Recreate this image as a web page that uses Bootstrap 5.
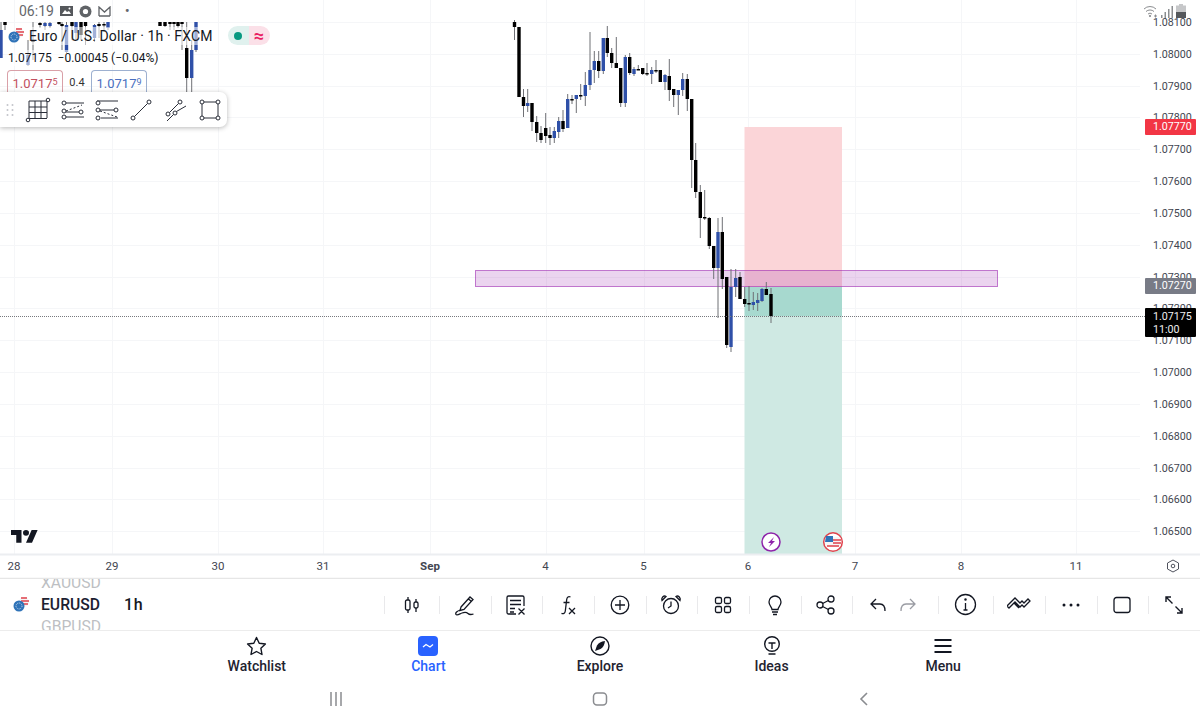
<!DOCTYPE html>
<html lang="en">

<head>
  <meta charset="utf-8">
  <meta name="viewport" content="width=device-width, initial-scale=1">
  <title>EURUSD Chart</title>
  <link href="https://cdn.jsdelivr.net/npm/bootstrap@5.3.6/dist/css/bootstrap.min.css" rel="stylesheet">
  <style>
    html, body { height: 720px; overflow: hidden; }
    body { font-family: Roboto, "Liberation Sans", sans-serif; color: #131722; background: #fff; }
    .chart-area { height: 579px; flex: none; }
    .chart-svg { display: block; }
    .chart-svg text { font-family: Roboto, "Liberation Sans", sans-serif; fill: #434651; }
    .price-txt { font-size: 10.7px; }
    .time-txt { font-size: 11.5px; }
    .status-bar { left: 0; right: 0; top: 0; height: 22px; padding: 0 19px; color: #66686c; font-size: 14px; gap: 6px; }
    .status-icons { left: 1143px; top: 4px; height: 14px; gap: 3px; }
    .legend-box { left: 7px; top: 26px; }
    .legend-flag { margin-left: 1px; }
    .legend-title { font-size: 14px; line-height: 18px; letter-spacing: .12px; background: rgba(255, 255, 255, .55); }
    .legend-vals { font-size: 12px; line-height: 16px; margin-top: 5px; margin-left: 1px; width: fit-content; background: rgba(255, 255, 255, .55); }
    .pill-pair { height: 19px; margin-left: 15px; border-radius: 10px; overflow: hidden; }
    .pill-green { width: 21px; background: #e0f1ee; }
    .pill-dot { width: 8px; height: 8px; border-radius: 50%; background: #089981; }
    .pill-pink { width: 21px; background: #fbe0e8; color: #e91e63; font-size: 18px; font-weight: 700; line-height: 1; }
    .quote-btn { width: 56px; height: 26px; border: 1px solid; border-radius: 4px 4px 0 0; border-bottom: 0; font-size: 13px; }
    .quote-btn sup { font-size: 9px; top: -.35em; }
    .quote-sell { color: #c2505f; border-color: #d9a0a8; }
    .quote-buy { color: #4a6fc0; border-color: #9db0d0; }
    .quote-mid { width: 28px; height: 26px; font-size: 11px; color: #333; }
    .draw-bar { left: 0; top: 92px; width: 227px; height: 35px; border-radius: 0 7px 7px 0; box-shadow: 0 1px 5px rgba(0, 0, 0, .28); padding-left: 5px; }
    .draw-grip { width: 10px; margin-right: 6px; }
    .draw-item { width: 34.4px; }
    .price-tag { left: 1145px; width: 51px; border-radius: 1px; color: #fff; font-size: 10.7px; line-height: 14px; padding: 1px 0 1px 8px; }
    .tag-red { top: 119px; background: #f23645; }
    .tag-grey { top: 278px; background: #787b86; }
    .tag-black { top: 308px; background: #000; height: 29px; line-height: 13px; padding-top: 2px; color: #eee; }
    .tool-row { height: 52px; flex: none; border-bottom: 1px solid #ececec; }
    .sym-box { width: 384px; padding-left: 13px; }
    .sym-list { height: 51px; margin-left: 11px; overflow: hidden; width: 83px; font-size: 15.7px; line-height: 22px; }
    .sym-fade { color: #bdbfc3; }
    .sym-main { font-weight: 500; color: #1c2030; }
    .sym-res { font-size: 16px; font-weight: 500; letter-spacing: .6px; }
    .tool-btn { flex: 0 0 51.67px; height: 100%; }
    .tool-btn::before { content: ""; position: absolute; left: 0; top: 17px; height: 18px; width: 1px; background: #e9e9eb; }
    .tool-wide { flex-basis: 55px; }
    .tool-dbl { flex-basis: 86px; }
    .tab-row { height: 54px; flex: none; width: 858px; }
    .tab-item { flex: 1 1 0; font-size: 14px; font-weight: 500; line-height: 16px; color: #1f2330; padding-top: 5px; }
    .tab-active { color: #2962ff; }
    .tab-item svg { display: block; margin-bottom: 2px; }
    .sys-row { height: 35px; flex: none; width: 792px; padding-bottom: 7px; }
    .sys-item { flex: 1 1 0; }
  </style>
</head>

<body>
  <div class="d-flex flex-column align-items-center vh-100">
    <div class="chart-area position-relative w-100">
      <svg id="chart" class="chart-svg" width="1200" height="579" viewBox="0 0 1200 579"></svg>

      <div class="status-bar position-absolute d-flex align-items-center">
        <span>06:19</span>
        <svg width="13" height="12" viewBox="0 0 13 12"><path fill="#55585c" d="M0 1h13v10H0z"/><path fill="#fff" d="M2 9l3-4 2 2 2-1 2 3z"/><circle cx="9.5" cy="3.5" r="1" fill="#fff"/></svg>
        <svg width="13" height="13" viewBox="0 0 13 13"><circle cx="6.5" cy="6.5" r="6" fill="#606367"/><circle cx="6.5" cy="6.5" r="2.6" fill="#fff"/></svg>
        <svg width="13" height="11" viewBox="0 0 13 11" fill="none" stroke="#606367" stroke-width="1.3"><path d="M1 10V1l5.5 5L12 1v9M1 10h11"/></svg>
        <span class="ms-2 lh-1 fw-bold small">•</span>
      </div>
      <div class="status-icons position-absolute d-flex align-items-end">
        <svg width="15" height="13" viewBox="0 0 15 13" fill="none" stroke="#8b8d90" stroke-width="1"><path d="M1 4a8.5 8.5 0 0 1 12 0M3 6.500a6 6 0 0 1 8 0M5 9a3 3 0 0 1 4 0"/><circle cx="7" cy="11" r=".7" fill="#8b8d90"/><path d="M11 11h3M12.500 9.500v3"/></svg>
        <svg width="12" height="12" viewBox="0 0 12 12" fill="#8b8d90"><path d="M0 9h1.500v3H0zM3.500 6H5v6H3.500zM7 3h1.500v9H7zM10.500 0H12v12h-1.500z"/></svg>
        <svg width="10" height="14" viewBox="0 0 10 14"><path fill="#c6c7c9" d="M3 0h4v1.500h3V8H0V1.500h3z"/><path fill="#55585c" d="M0 8h10v6H0z"/></svg>
      </div>

      <div class="legend-box position-absolute">
        <div class="d-flex align-items-center">
          <svg width="17" height="17" viewBox="0 0 17 17" class="legend-flag me-1 flex-none"><circle cx="11" cy="6" r="5" fill="#f6f6f6"/><path d="M8 2h6M8 5h8M9 8h6" stroke="#e0424c" stroke-width="1.400"/><circle cx="6" cy="10" r="5.500" fill="#2f73b8"/><circle cx="6" cy="10" r="3" fill="none" stroke="#cfe0f0" stroke-dasharray="1 1"/></svg>
          <span class="legend-title">Euro / U.S. Dollar · 1h · FXCM</span>
          <span class="pill-pair d-flex">
            <span class="pill-green d-flex align-items-center justify-content-center"><span class="pill-dot"></span></span>
            <span class="pill-pink d-flex align-items-center justify-content-center">≈</span>
          </span>
        </div>
        <div class="legend-vals">1.07175 &nbsp;−0.00045 (−0.04%)</div>
        <div class="d-flex align-items-start mt-1">
          <div class="quote-btn quote-sell d-flex align-items-center justify-content-center"><span>1.0717<sup>5</sup></span></div>
          <div class="quote-mid d-flex align-items-center justify-content-center">0.4</div>
          <div class="quote-btn quote-buy d-flex align-items-center justify-content-center"><span>1.0717<sup>9</sup></span></div>
        </div>
      </div>

      <div class="draw-bar position-absolute bg-white d-flex align-items-center">
        <svg class="draw-grip" width="10" height="14" viewBox="0 0 10 14" fill="#c3c5ca"><circle cx="2.500" cy="2" r="1"/><circle cx="7.500" cy="2" r="1"/><circle cx="2.500" cy="7" r="1"/><circle cx="7.500" cy="7" r="1"/><circle cx="2.500" cy="12" r="1"/><circle cx="7.500" cy="12" r="1"/></svg>
        <div class="draw-item d-flex justify-content-center"><svg width="26" height="26" viewBox="0 0 26 26" fill="none" stroke="#2a2e39" stroke-width="1"><path d="M4 4h18v17M4 4v17.500M3.500 21.500h18.500M10 4v17.500M16 4v17.500M4 10h18M4 15.500h18"/><circle cx="23" cy="3" r="1.800" fill="#fff"/><circle cx="3" cy="23" r="1.800" fill="#fff"/></svg></div>
        <div class="draw-item d-flex justify-content-center"><svg width="26" height="24" viewBox="0 0 26 24" fill="none" stroke="#2a2e39" stroke-width="1"><circle cx="4" cy="5" r="2" fill="#fff"/><path d="M6 5h18"/><circle cx="4" cy="13" r="2" fill="#fff"/><path d="M6 13 22 7" stroke-dasharray="2 2"/><circle cx="4" cy="19" r="2" fill="#fff"/><path d="M6 19h18"/><path d="M6 14h13"/><circle cx="21" cy="14" r="2" fill="#fff"/></svg></div>
        <div class="draw-item d-flex justify-content-center"><svg width="26" height="24" viewBox="0 0 26 24" fill="none" stroke="#2a2e39" stroke-width="1"><path d="M3 3h21M5 12h15M7 20h17"/><circle cx="4" cy="5" r="2" fill="#fff"/><circle cx="4" cy="12" r="2" fill="#fff"/><circle cx="22" cy="12" r="2" fill="#fff"/><circle cx="4" cy="20" r="2" fill="#fff"/><path d="M6 13l17 6" stroke-dasharray="2 2"/></svg></div>
        <div class="draw-item d-flex justify-content-center"><svg width="24" height="24" viewBox="0 0 24 24" fill="none" stroke="#2a2e39" stroke-width="1"><circle cx="4" cy="20" r="2" fill="#fff"/><circle cx="20" cy="4" r="2" fill="#fff"/><path d="M5.500 18.500l13-13"/></svg></div>
        <div class="draw-item d-flex justify-content-center"><svg width="24" height="24" viewBox="0 0 24 24" fill="none" stroke="#2a2e39" stroke-width="1"><circle cx="4" cy="16" r="2" fill="#fff"/><circle cx="16" cy="4" r="2" fill="#fff"/><path d="M5.500 14.500l9-9"/><circle cx="11" cy="15" r="2" fill="#fff"/><path d="M3 23l6.500-6.500M12.500 13.500L22 8"/></svg></div>
        <div class="draw-item d-flex justify-content-center"><svg width="24" height="24" viewBox="0 0 24 24" fill="none" stroke="#2a2e39" stroke-width="1"><path d="M4 4h16v16H4z"/><circle cx="4" cy="4" r="2" fill="#fff"/><circle cx="20" cy="4" r="2" fill="#fff"/><circle cx="4" cy="20" r="2" fill="#fff"/><circle cx="20" cy="20" r="2" fill="#fff"/></svg></div>
      </div>

      <div class="price-tag tag-red position-absolute">1.07770</div>
      <div class="price-tag tag-grey position-absolute">1.07270</div>
      <div class="price-tag tag-black position-absolute">1.07175<br>11:00</div>
    </div>

    <div class="tool-row d-flex align-items-center w-100 bg-white">
      <div class="sym-box d-flex align-items-center">
        <svg width="17" height="17" viewBox="0 0 17 17" class="flex-none"><circle cx="11" cy="6" r="5" fill="#f6f6f6"/><path d="M8 2h6M8 5h8M9 8h6" stroke="#e0424c" stroke-width="1.400"/><circle cx="6" cy="10" r="5.500" fill="#2f73b8"/><circle cx="6" cy="10" r="3" fill="none" stroke="#cfe0f0" stroke-dasharray="1 1"/></svg>
        <div class="sym-list d-flex flex-column justify-content-center">
          <div class="sym-fade">XAUUSD</div>
          <div class="sym-main">EURUSD</div>
          <div class="sym-fade">GBPUSD</div>
        </div>
        <span class="sym-res">1h</span>
      </div>
      <div class="d-flex align-items-center flex-grow-1 h-100">
        <div class="tool-btn tool-wide position-relative d-flex align-items-center justify-content-center"><svg width="22" height="22" viewBox="0 0 22 22" fill="none" stroke="#131722" stroke-width="1.300"><path d="M7 3v16M15 5v13"/><rect x="4.500" y="6" width="4.500" height="10" rx="1.500" fill="#fff"/><rect x="13" y="8" width="4" height="6" rx="1.500" fill="#fff"/></svg></div>
        <div class="tool-btn position-relative d-flex align-items-center justify-content-center"><svg width="22" height="22" viewBox="0 0 22 22" fill="none" stroke="#131722" stroke-width="1.300"><path d="M7 13l9-10 3 2.500-9 10-4 1zM14.500 5l3 2.500"/><path d="M6.500 16C3 17 1 19 2 20.500s3.500-.5 6-1.500 5-.5 6 .5 4 1 5.500.5"/></svg></div>
        <div class="tool-btn position-relative d-flex align-items-center justify-content-center"><svg width="22" height="22" viewBox="0 0 22 22" fill="none" stroke="#131722" stroke-width="1.300"><path d="M11 20H3.500a1.500 1.500 0 0 1-1.500-1.500v-15A1.500 1.500 0 0 1 3.500 2h14A1.500 1.500 0 0 1 19 3.500V12M5 6.500h11M5 10.500h11M5 14.500h5M5 18h4M13.500 14.500l6 6M19.500 14.500l-6 6"/></svg></div>
        <div class="tool-btn position-relative d-flex align-items-center justify-content-center"><svg width="22" height="22" viewBox="0 0 22 22" fill="none" stroke="#131722" stroke-width="1.300"><path d="M13.500 3c-2-1-3.500 0-3.800 2.500L8.300 17c-.3 2.500-2 3.200-3.800 2.300M6.500 8.500h6M12 14l6 6M18 14l-6 6"/></svg></div>
        <div class="tool-btn position-relative d-flex align-items-center justify-content-center"><svg width="22" height="22" viewBox="0 0 22 22" fill="none" stroke="#131722" stroke-width="1.300"><circle cx="11" cy="11" r="8.800"/><path d="M11 6v10M6 11h10"/></svg></div>
        <div class="tool-btn position-relative d-flex align-items-center justify-content-center"><svg width="22" height="22" viewBox="0 0 22 22" fill="none" stroke="#131722" stroke-width="1.300"><circle cx="11" cy="12" r="7.500"/><path d="M11 7.500V12l-3 2M2 6.500L6 2.500c-2-1.500-5 1-4 4zM20 6.500l-4-4c2-1.500 5 1 4 4z"/></svg></div>
        <div class="tool-btn position-relative d-flex align-items-center justify-content-center"><svg width="22" height="22" viewBox="0 0 22 22" fill="none" stroke="#131722" stroke-width="1.300"><rect x="3.500" y="3.500" width="6" height="6" rx="1.500"/><rect x="12.500" y="3.500" width="6" height="6" rx="1.500"/><rect x="3.500" y="12.500" width="6" height="6" rx="1.500"/><rect x="12.500" y="12.500" width="6" height="6" rx="1.500"/></svg></div>
        <div class="tool-btn position-relative d-flex align-items-center justify-content-center"><svg width="22" height="22" viewBox="0 0 22 22" fill="none" stroke="#131722" stroke-width="1.300"><path d="M8 15.500c0-2.500-3-3.500-3-7.500a6 6 0 0 1 12 0c0 4-3 5-3 7.500zM8 18h6M9 20.500h4"/></svg></div>
        <div class="tool-btn position-relative d-flex align-items-center justify-content-center"><svg width="22" height="22" viewBox="0 0 22 22" fill="none" stroke="#131722" stroke-width="1.300"><circle cx="5" cy="11" r="3"/><circle cx="16" cy="5" r="3"/><circle cx="16" cy="17" r="3"/><path d="M7.600 9.500l5.800-3M7.600 12.500l5.800 3"/></svg></div>
        <div class="tool-btn tool-dbl position-relative d-flex align-items-center justify-content-between px-3"><svg width="20" height="20" viewBox="0 0 20 20" fill="none" stroke="#131722" stroke-width="1.300"><path d="M8 4L3 9l5 5M3 9h9c3 0 5 2 5 7"/></svg><svg class="me-1" width="20" height="20" viewBox="0 0 20 20" fill="none" stroke="#9a9ca3" stroke-width="1.300"><path d="M12 4l5 5-5 5M17 9H8c-3 0-5 2-5 7"/></svg></div>
        <div class="tool-btn tool-wide position-relative d-flex align-items-center justify-content-center"><svg width="23" height="23" viewBox="0 0 23 23" fill="none" stroke="#131722" stroke-width="1.300"><circle cx="11.500" cy="11.500" r="10"/><path d="M11.500 10v7M9.500 17h4"/><circle cx="11.500" cy="6.500" r=".6" fill="#131722"/></svg></div>
        <div class="tool-btn position-relative d-flex align-items-center justify-content-center"><svg width="24" height="22" viewBox="0 0 24 22" fill="none" stroke="#131722" stroke-width="1.300"><path d="M2 14l6-6 5 5 2-2 2 2 6-6-2-2-4 4-2-2-2 2-5-5-8 8 2 2 5-5 5 5"/></svg></div>
        <div class="tool-btn position-relative d-flex align-items-center justify-content-center"><svg width="20" height="6" viewBox="0 0 20 6" fill="#131722"><circle cx="3" cy="3" r="1.500"/><circle cx="10" cy="3" r="1.500"/><circle cx="17" cy="3" r="1.500"/></svg></div>
        <div class="tool-btn position-relative d-flex align-items-center justify-content-center"><svg width="20" height="20" viewBox="0 0 20 20" fill="none" stroke="#131722" stroke-width="1.300"><rect x="2" y="2.500" width="16" height="15" rx="2.500"/></svg></div>
        <div class="tool-btn position-relative d-flex align-items-center justify-content-center"><svg width="22" height="22" viewBox="0 0 22 22" fill="none" stroke="#131722" stroke-width="1.400"><path d="M3 8V3h5M3 3l6.500 6.500M19 14v5h-5M19 19l-6.500-6.500"/></svg></div>
      </div>
    </div>

    <div class="tab-row d-flex">
      <div class="tab-item d-flex flex-column align-items-center"><svg width="21" height="20" viewBox="0 0 21 20" fill="none" stroke="#131722" stroke-width="1.400" stroke-linejoin="round"><path d="M10.500 1.500l2.700 5.700 6.200.8-4.500 4.300 1.100 6.200-5.500-3-5.500 3 1.100-6.200L1.600 8l6.200-.8z"/></svg>Watchlist</div>
      <div class="tab-item tab-active d-flex flex-column align-items-center"><svg width="20" height="20" viewBox="0 0 20 20"><rect width="20" height="20" rx="4" fill="#2962ff"/><path d="M5 11l3-2.500 4 2.500 3-2.500" fill="none" stroke="#fff" stroke-width="1.300"/></svg>Chart</div>
      <div class="tab-item d-flex flex-column align-items-center"><svg width="20" height="20" viewBox="0 0 20 20"><circle cx="10" cy="10" r="9" fill="none" stroke="#131722" stroke-width="1.400"/><path d="M15 5c-4 .5-6.500 2-8 4.500L5 15l5.500-2C13 11.500 14.500 9 15 5z" fill="#131722"/></svg>Explore</div>
      <div class="tab-item d-flex flex-column align-items-center"><svg width="20" height="20" viewBox="0 0 20 20" fill="none" stroke="#131722" stroke-width="1.400"><circle cx="10" cy="8" r="7.300"/><path d="M6.500 7h7M10 7v6M6.500 18h7"/></svg>Ideas</div>
      <div class="tab-item d-flex flex-column align-items-center"><svg width="20" height="20" viewBox="0 0 20 20" fill="none" stroke="#131722" stroke-width="1.800"><path d="M1.500 4h17M1.500 10h17M1.500 16h17"/></svg>Menu</div>
    </div>

    <div class="sys-row d-flex align-items-center">
      <div class="sys-item d-flex justify-content-center"><svg width="14" height="14" viewBox="0 0 14 14" fill="none" stroke="#8a8c90" stroke-width="1.500"><path d="M2 0v14M7 0v14M12 0v14"/></svg></div>
      <div class="sys-item d-flex justify-content-center"><svg width="16" height="16" viewBox="0 0 16 16" fill="none" stroke="#8a8c90" stroke-width="1.500"><rect x="1.500" y="2" width="13" height="12" rx="3.500"/></svg></div>
      <div class="sys-item d-flex justify-content-center"><svg width="10" height="16" viewBox="0 0 10 16" fill="none" stroke="#8a8c90" stroke-width="1.600"><path d="M8 2L2 8l6 6"/></svg></div>
    </div>
  </div>

  <script src="https://cdn.jsdelivr.net/npm/bootstrap@5.3.6/dist/js/bootstrap.bundle.min.js"></script>
  <script>
    // x, wick top, wick bottom, body top, body bottom, b = blue / k = black
    const candles = [
      [1, 22, 58, 30, 58, 'b'], [5, 22, 30, 22, 25, 'k'], [28, 40, 66, 55, 65, 'b'], [33, 22, 60, 40, 42, 'k'],
      [40, 22, 28, 23, 25, 'k'], [45, 22, 30, 23, 26, 'b'], [50, 22, 28, 23, 26, 'b'], [59, 22, 25, 22, 24, 'k'],
      [62, 22, 50, 24, 26, 'k'], [66.5, 22, 53, 25, 52, 'b'], [72, 22, 40, 22, 26, 'k'], [76, 22, 40, 22, 33, 'b'],
      [81, 22, 40, 22, 35, 'k'], [85.5, 22, 45, 22, 26, 'k'], [94.5, 24, 42, 25, 38, 'b'], [99, 22, 38, 24, 26, 'k'],
      [104, 22, 32, 24, 25, 'k'], [108, 22, 30, 22, 28, 'b'], [160, 22, 26, 22, 26, 'k'], [165, 22, 27, 22, 26, 'k'],
      [170, 22, 30, 22, 24, 'k'], [174, 22, 30, 22, 24, 'k'], [178, 22, 28, 22, 26, 'k'], [182, 22, 50, 22, 24, 'k'],
      [186.7, 22, 93, 48, 78, 'k'], [191.7, 40, 93, 50, 78, 'b'], [196, 22, 52, 22, 50, 'b'],
      [514.5, 20, 40, 22, 27, 'k'], [519, 27, 97, 27, 97, 'k'], [523.5, 89, 117, 97, 106, 'k'], [527.7, 89, 112, 103, 106, 'b'],
      [532, 103, 131, 103, 122, 'k'], [536.7, 116, 142, 122, 133, 'k'], [541, 126, 143, 133, 140, 'k'], [545.7, 113, 143, 128, 136, 'k'],
      [550, 127, 145, 135, 138, 'k'], [554.3, 127, 143, 131, 138, 'b'], [558.7, 117, 138, 121, 132, 'b'], [563, 110, 132, 121, 129, 'k'],
      [567.7, 94, 128, 99, 128, 'b'], [572, 95, 104, 99, 100, 'k'], [576.3, 95, 113, 95, 99, 'b'], [580.7, 84, 100, 95, 96, 'k'],
      [585.3, 72, 106, 85, 96, 'b'], [590, 32, 90, 70, 85, 'b'], [594.3, 51, 83, 61, 70, 'b'], [598.7, 51, 78, 61, 71, 'k'],
      [603.3, 38, 74, 38, 71, 'b'], [607.3, 26, 57, 38, 53, 'k'], [611.7, 48, 68, 53, 63, 'k'], [616.3, 37, 68, 63, 68, 'k'],
      [620.7, 68, 107, 68, 103, 'k'], [625.3, 55, 107, 57, 103, 'b'], [629.7, 53, 75, 57, 73, 'k'], [634, 67, 76, 69, 74, 'b'],
      [638.3, 65, 70, 69, 70, 'k'], [642.7, 68, 75, 68, 74, 'k'], [647, 63, 76, 73, 74, 'k'], [651.7, 67, 84, 70, 74, 'b'],
      [656, 60, 73, 70, 71, 'k'], [660.3, 70, 82, 70, 82, 'k'], [665, 74, 90, 75, 82, 'b'], [669.3, 59, 101, 76, 90, 'k'],
      [673.7, 89, 107, 89, 95, 'k'], [678.3, 90, 115, 90, 95, 'b'], [682.7, 73, 96, 79, 90, 'b'], [687.3, 74, 111, 79, 99, 'k'],
      [691.7, 99, 188, 99, 160, 'k'], [695.7, 143, 198, 160, 192, 'k'], [700.3, 185, 238, 192, 218, 'k'], [704.7, 190, 220, 217, 218, 'k'],
      [709.3, 217, 249, 218, 246, 'k'], [713.7, 246, 279, 246, 268, 'k'], [718, 218, 318, 232, 268, 'b'], [722.3, 217, 289, 232, 279, 'k'],
      [726.7, 277, 348, 277, 345, 'k'], [731, 269, 352, 287, 347, 'b'], [735.7, 269, 297, 278, 287, 'b'], [740, 272, 299, 277, 299, 'k'],
      [744.7, 287, 307, 299, 304, 'k'], [749, 286, 311, 303, 304, 'k'], [753.3, 292, 310, 302, 305, 'b'], [757.7, 293, 311, 300, 303, 'b'],
      [762, 288, 302, 289, 301, 'b'], [766.3, 282, 295, 289, 295, 'k'], [771, 288, 323, 294, 316, 'k']
    ];
    const prices = ['1.08100', '1.08000', '1.07900', '1.07800', '1.07700', '1.07600', '1.07500', '1.07400', '1.07300', '1.07200', '1.07100', '1.07000', '1.06900', '1.06800', '1.06700', '1.06600', '1.06500'];
    const days = [[14, '28'], [112, '29'], [218, '30'], [323, '31'], [430, 'Sep'], [545.5, '4'], [643.5, '5'], [748, '6'], [855, '7'], [961, '8'], [1076, '11']];

    let s = '';
    // grid
    prices.forEach((p, i) => {
      const y = Math.round(22 + i * 31.83);
      s += `<path d="M0 ${y + .5}H1140" stroke="#f5f6f8"/>`;
    });
    days.forEach(d => {
      s += `<path d="M${Math.round(d[0]) + .5} 0V554" stroke="#f5f6f8"/>`;
    });
    // position tool and zone
    s += `<rect x="744.500" y="127" width="97.500" height="160" fill="#fbd5d8"/>`;
    s += `<rect x="744.500" y="287" width="97.500" height="267" fill="#cfe9e3"/>`;
    s += `<rect x="744.500" y="287" width="97.500" height="29" fill="#089981" fill-opacity=".2"/>`;
    s += `<rect x="475.500" y="270.500" width="522" height="16" fill="#9c27b0" fill-opacity=".2" stroke="#9c27b0" stroke-opacity=".6"/>`;
    // candles
    candles.forEach(c => {
      const fill = c[5] === 'b' ? '#2f50a8' : '#000';
      s += `<path d="M${c[0]} ${c[1]}V${c[2]}" stroke="#6f7075" stroke-width="1"/>`;
      s += `<rect x="${c[0] - 1.7}" y="${c[3]}" width="3.400" height="${Math.max(c[4] - c[3], 1.500)}" fill="${fill}"/>`;
    });
    // last price line
    s += `<path d="M0 316.500H1145" stroke="#77797e" stroke-width="1" stroke-dasharray="1 1"/>`;
    // price scale, time scale
    prices.forEach((p, i) => {
      const y = Math.round(22 + i * 31.83);
      s += `<text class="price-txt" x="1153" y="${y + 4}">${p}</text>`;
    });
    s += `<path d="M0 554.500H1200" stroke="#eceef1" stroke-width="2"/><path d="M0 578.500H1200" stroke="#e6e6e6" stroke-width="1.500"/>`;
    days.forEach(d => {
      s += `<text class="time-txt" x="${d[0]}" y="570" text-anchor="middle"${d[1] === 'Sep' ? ' font-weight="700"' : ''}>${d[1]}</text>`;
    });
    s += `<path d="M1173 560l5.500 3v6l-5.500 3-5.500-3v-6z" fill="none" stroke="#50535e"/><circle cx="1173" cy="566" r="1.800" fill="none" stroke="#50535e"/>`;
    // TV logo
    s += `<g transform="translate(11 527) scale(.75 .72)" fill="#131722"><path d="M14 22H7V11H0V4h14v18zM28 22h-8l7.500-18h8L28 22z"/><circle cx="20" cy="8" r="4"/></g>`;
    // event markers
    s += `<circle cx="771" cy="542" r="9" fill="#fff" stroke="#8e24aa" stroke-width="1.500"/><path d="M774 537l-6 6h3l-2 4 6-6h-3z" fill="#8e24aa"/>`;
    s += `<circle cx="833" cy="542" r="9.300" fill="#fff" stroke="#e0424c" stroke-width="1.500"/><path d="M826 537h14a7 7 0 0 1 1 5 8 8 0 0 1-1 5h-14a8 8 0 0 1-1-5 7 7 0 0 1 1-5z" fill="#f6f6f6"/><path d="M833 540h8M833 543h8M827 546h12" stroke="#e0424c" stroke-width="1.300"/><path d="M826 536h7v6h-8z" fill="#2f73b8"/>`;
    document.getElementById('chart').innerHTML = s;
  </script>
</body>

</html>
